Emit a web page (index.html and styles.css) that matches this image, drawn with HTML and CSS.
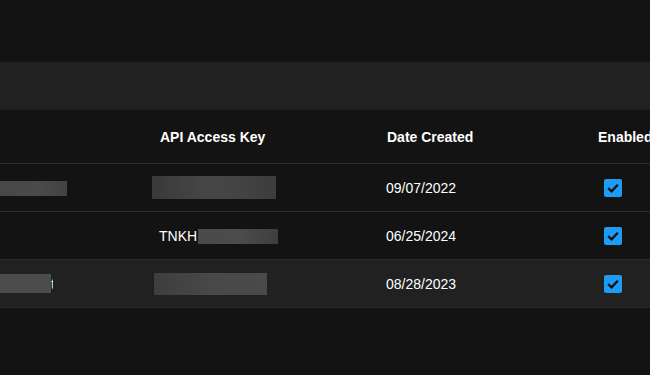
FILE: index.html
```html
<!DOCTYPE html>
<html lang="en">
<head>
    <meta charset="UTF-8">
    <meta name="viewport" content="width=device-width, initial-scale=1.0">
    <title>API Keys</title>
    <link rel="stylesheet" href="styles.css">
</head>
<body>
    <div class="page">
        <div class="toolbar"></div>
        <table class="keys-table">
            <thead>
                <tr>
                    <th class="col-name"></th>
                    <th class="col-key">API Access Key</th>
                    <th class="col-date">Date Created</th>
                    <th class="col-enabled">Enabled</th>
                </tr>
            </thead>
            <tbody>
                <tr>
                    <td class="col-name"><span class="redact name-1"></span></td>
                    <td class="col-key"><span class="redact key-1"></span></td>
                    <td class="col-date">09/07/2022</td>
                    <td class="col-enabled"><span class="checkbox"><svg viewBox="0 0 18 18" width="18" height="18"><path d="M4.2 9.2 L7.6 12.4 L13.8 5.8" fill="none" stroke="#141414" stroke-width="2.4"/></svg></span></td>
                </tr>
                <tr>
                    <td class="col-name"></td>
                    <td class="col-key"><span class="key-prefix">TNKH</span><span class="redact key-2"></span></td>
                    <td class="col-date">06/25/2024</td>
                    <td class="col-enabled"><span class="checkbox"><svg viewBox="0 0 18 18" width="18" height="18"><path d="M4.2 9.2 L7.6 12.4 L13.8 5.8" fill="none" stroke="#141414" stroke-width="2.4"/></svg></span></td>
                </tr>
                <tr class="selected">
                    <td class="col-name"><span class="redact name-3"></span><span class="tail">t</span></td>
                    <td class="col-key"><span class="redact key-3"></span></td>
                    <td class="col-date">08/28/2023</td>
                    <td class="col-enabled"><span class="checkbox"><svg viewBox="0 0 18 18" width="18" height="18"><path d="M4.2 9.2 L7.6 12.4 L13.8 5.8" fill="none" stroke="#141414" stroke-width="2.4"/></svg></span></td>
                </tr>
            </tbody>
        </table>
    </div>
</body>
</html>
```

FILE: styles.css
```css
body {
    margin: 0;
    background-color: #131313;
    font-family: 'Liberation Sans', Arial, sans-serif;
    color: #ffffff;
    overflow: hidden;
}

.page {
    padding-top: 62px;
    width: 700px;
}

.toolbar {
    height: 48px;
    background-color: #212121;
}

.keys-table {
    border-collapse: collapse;
    table-layout: fixed;
    width: 700px;
    font-size: 14px;
}

.keys-table th,
.keys-table td {
    padding: 0 12px;
    text-align: left;
    white-space: nowrap;
    overflow: hidden;
    border-bottom: 1px solid #2c2c2c;
}

.keys-table th {
    height: 53px;
    font-weight: 700;
}

.keys-table td {
    height: 47px;
}

.selected td {
    background-color: #212121;
}

.col-name {
    width: 135px;
}

.keys-table .col-name {
    padding-left: 0;
}

.col-key {
    width: 202px;
}

.keys-table th.col-key {
    padding-left: 13px;
}

.col-date {
    width: 186px;
}

.keys-table th.col-date {
    padding-left: 13px;
}

.col-enabled {
    width: 92px;
}

.keys-table th.col-enabled {
    padding-left: 13px;
}

.redact {
    display: inline-block;
    vertical-align: middle;
    background: linear-gradient(90deg, #3a3a3a 0%, #464646 45%, #444444 70%, #3c3c3c 100%);
}

.name-1 {
    width: 67px;
    height: 15px;
    background: linear-gradient(90deg, #484848 0%, #4a4a4a 60%, #424242 100%);
}

.name-3 {
    width: 51px;
    height: 19px;
    background: #4c4c4c;
}

.tail {
    display: inline-block;
    vertical-align: middle;
    width: 2px;
    overflow: hidden;
    color: #f3e9d6;
}

.key-1 {
    width: 124px;
    height: 23px;
    margin-left: -7px;
}

.key-2 {
    width: 80px;
    height: 15px;
    margin-left: 1px;
    background: linear-gradient(90deg, #4a4a4a 0%, #4c4c4c 50%, #3e3e3e 100%);
}

.key-prefix {
    vertical-align: middle;
}

.key-3 {
    width: 113px;
    height: 22px;
    margin-left: -5px;
    background: linear-gradient(90deg, #3e3e3e 0%, #484848 50%, #4a4a4a 100%);
}

.checkbox {
    display: inline-flex;
    align-items: center;
    justify-content: center;
    width: 18px;
    height: 18px;
    margin-left: 7px;
    margin-top: 1px;
    border-radius: 2px;
    background-color: #1e9bf2;
    vertical-align: middle;
}

.checkbox svg {
    display: block;
}
```
